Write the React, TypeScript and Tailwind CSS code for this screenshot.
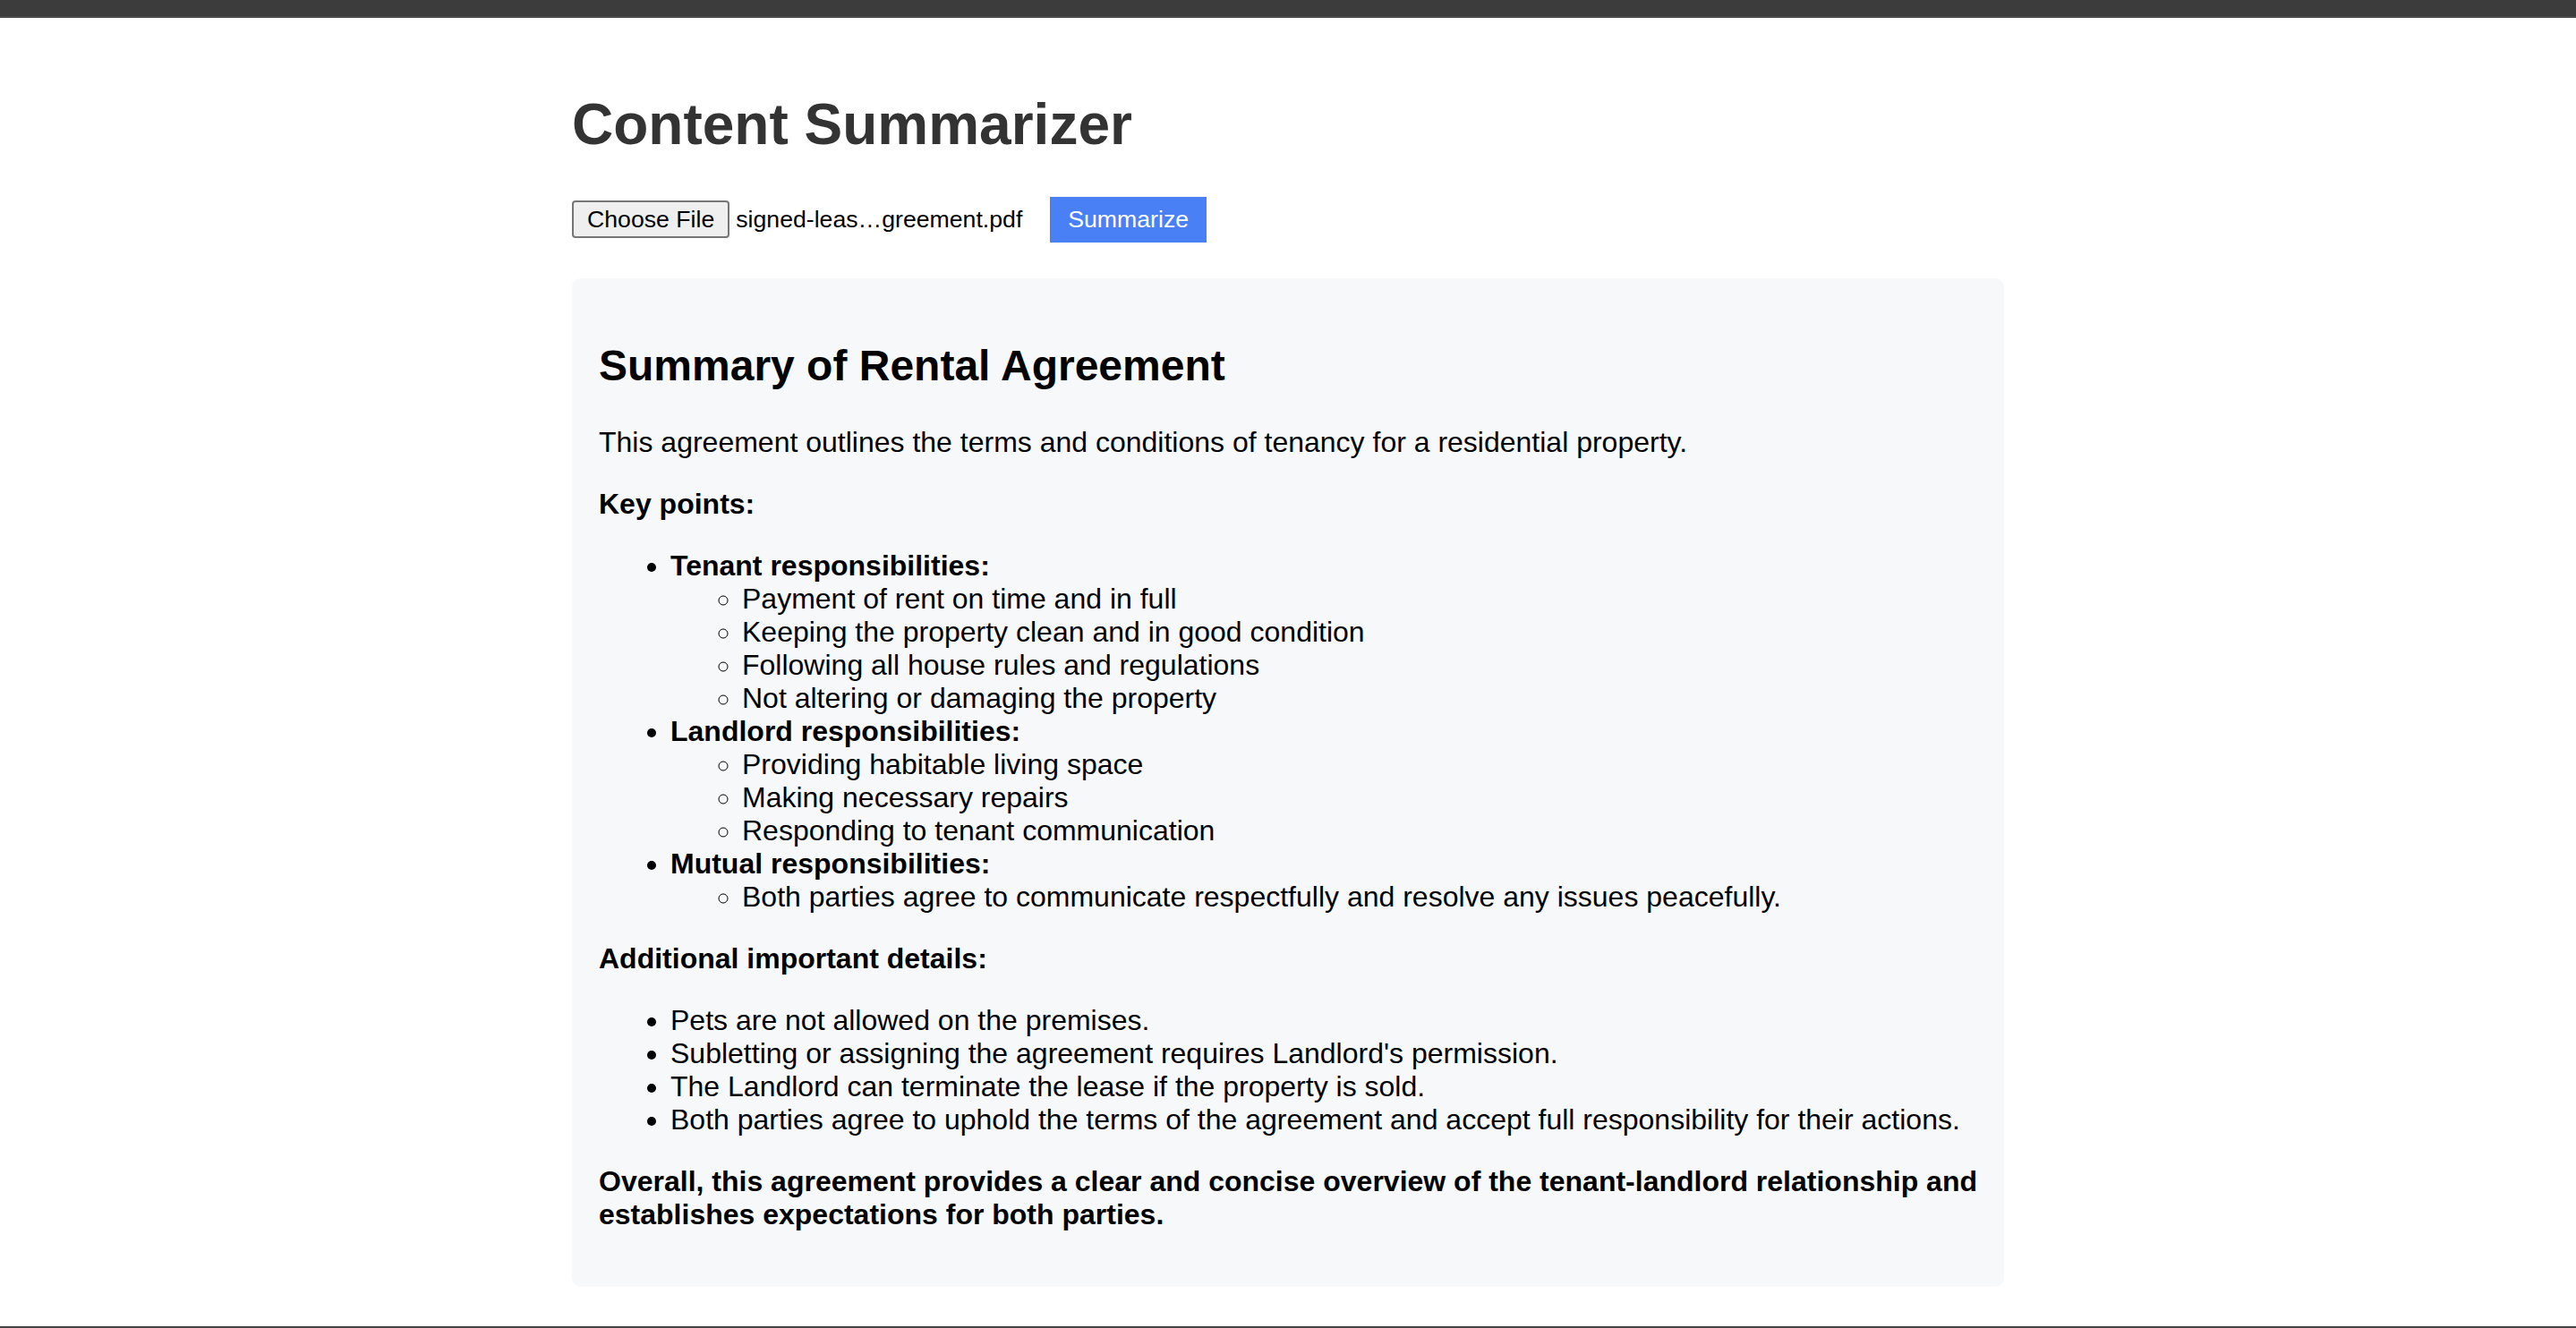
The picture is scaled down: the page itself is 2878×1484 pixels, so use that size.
export default function App() {
  return (
    <div className="h-[1484px] flex flex-col bg-white font-['Liberation_Sans',Arial,sans-serif] text-black leading-[1.15]">
      <div className="h-[20px] bg-[#3c3c3c] border-b-2 border-[#4a4a4a] shrink-0" />
      <main className="flex-1 px-[40px] pt-[40px] overflow-hidden">
        <div className="max-w-[1600px] mx-auto">
          <h1 className="text-[64px] font-bold text-[#333] my-[43px]">Content Summarizer</h1>

          <div className="flex items-center h-[51px]">
            <button className="h-[42px] px-[15px] bg-[#efefef] border-2 border-[#767676] rounded-[4px] text-[26.67px]">
              Choose File
            </button>
            <span className="inline-block w-[331px] ml-[7px] text-[26.67px] whitespace-nowrap">
              signed-leas…greement.pdf
            </span>
            <button className="h-[51px] ml-[20px] px-[20px] bg-[#4a80f5] text-white text-[26.67px]">
              Summarize
            </button>
          </div>

          <div className="mt-[40px] bg-[#f7f8fa] rounded-[10px] p-[30px] leading-[1.156]">
            <h2 className="text-[48px] font-bold my-[40px]">Summary of Rental Agreement</h2>
            <p className="text-[32px] my-[32px]">
              This agreement outlines the terms and conditions of tenancy for a residential property.
            </p>
            <p className="text-[32px] my-[32px] font-bold">Key points:</p>

            <ul className="list-disc pl-[80px] my-[32px] text-[32px]">
              <li>
                <strong>Tenant responsibilities:</strong>
                <ul className="list-[circle] pl-[80px]">
                  <li>Payment of rent on time and in full</li>
                  <li>Keeping the property clean and in good condition</li>
                  <li>Following all house rules and regulations</li>
                  <li>Not altering or damaging the property</li>
                </ul>
              </li>
              <li>
                <strong>Landlord responsibilities:</strong>
                <ul className="list-[circle] pl-[80px]">
                  <li>Providing habitable living space</li>
                  <li>Making necessary repairs</li>
                  <li>Responding to tenant communication</li>
                </ul>
              </li>
              <li>
                <strong>Mutual responsibilities:</strong>
                <ul className="list-[circle] pl-[80px]">
                  <li>Both parties agree to communicate respectfully and resolve any issues peacefully.</li>
                </ul>
              </li>
            </ul>

            <p className="text-[32px] my-[32px] font-bold">Additional important details:</p>

            <ul className="list-disc pl-[80px] my-[32px] text-[32px]">
              <li>Pets are not allowed on the premises.</li>
              <li>Subletting or assigning the agreement requires Landlord's permission.</li>
              <li>The Landlord can terminate the lease if the property is sold.</li>
              <li>Both parties agree to uphold the terms of the agreement and accept full responsibility for their actions.</li>
            </ul>

            <p className="text-[32px] my-[32px] font-bold">
              <span className="whitespace-nowrap">
                Overall, this agreement provides a clear and concise overview of the tenant-landlord relationship and
              </span>
              <br />
              establishes expectations for both parties.
            </p>
          </div>
        </div>
      </main>
      <div className="h-[2px] bg-[#444] shrink-0" />
    </div>
  );
}
